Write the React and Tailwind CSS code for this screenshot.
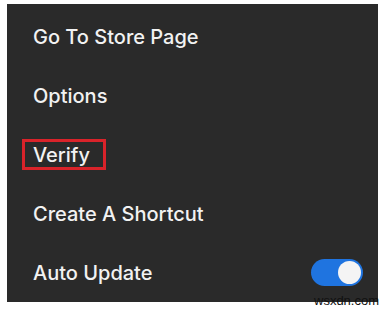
export default function App() {
  const font = { fontFamily: "Inter, 'Noto Sans', sans-serif" };
  return (
    <div className="w-[388px] h-[310px] bg-white pl-[7px] pt-[4px] relative overflow-hidden" style={font}>
      <div className="w-[371px] h-[298px] bg-[#2a2a2a] flex flex-col pt-[4px] pl-[26px] pr-[15px]">
        <div className="h-[59px] flex items-center text-[20px] font-medium text-[#f2f2f2]">Go To Store Page</div>
        <div className="h-[59px] flex items-center text-[20px] font-medium text-[#f2f2f2]">Options</div>
        <div className="h-[59px] flex items-center text-[20px] font-medium text-[#f2f2f2]">
          <span className="ml-[-11px] h-[31px] flex items-center border-[3px] border-[#d9232a] pl-[8px] pr-[13px]">Verify</span>
        </div>
        <div className="h-[59px] flex items-center text-[20px] font-medium text-[#f2f2f2]">Create A Shortcut</div>
        <div className="h-[59px] flex items-center justify-between text-[20px] font-medium text-[#f2f2f2]">
          <span>Auto Update</span>
          <div className="w-[52px] h-[27px] rounded-full bg-[#1f74e0] flex items-center justify-end pr-[2px]">
            <div className="w-[23px] h-[23px] rounded-full bg-[#f4f4f4]"></div>
          </div>
        </div>
      </div>
      <div className="absolute left-[314px] top-[294px] text-[13px] text-[#111] leading-none" style={{ fontFamily: "'Liberation Sans', Arial, sans-serif" }}>wsxdn.com</div>
    </div>
  );
}
